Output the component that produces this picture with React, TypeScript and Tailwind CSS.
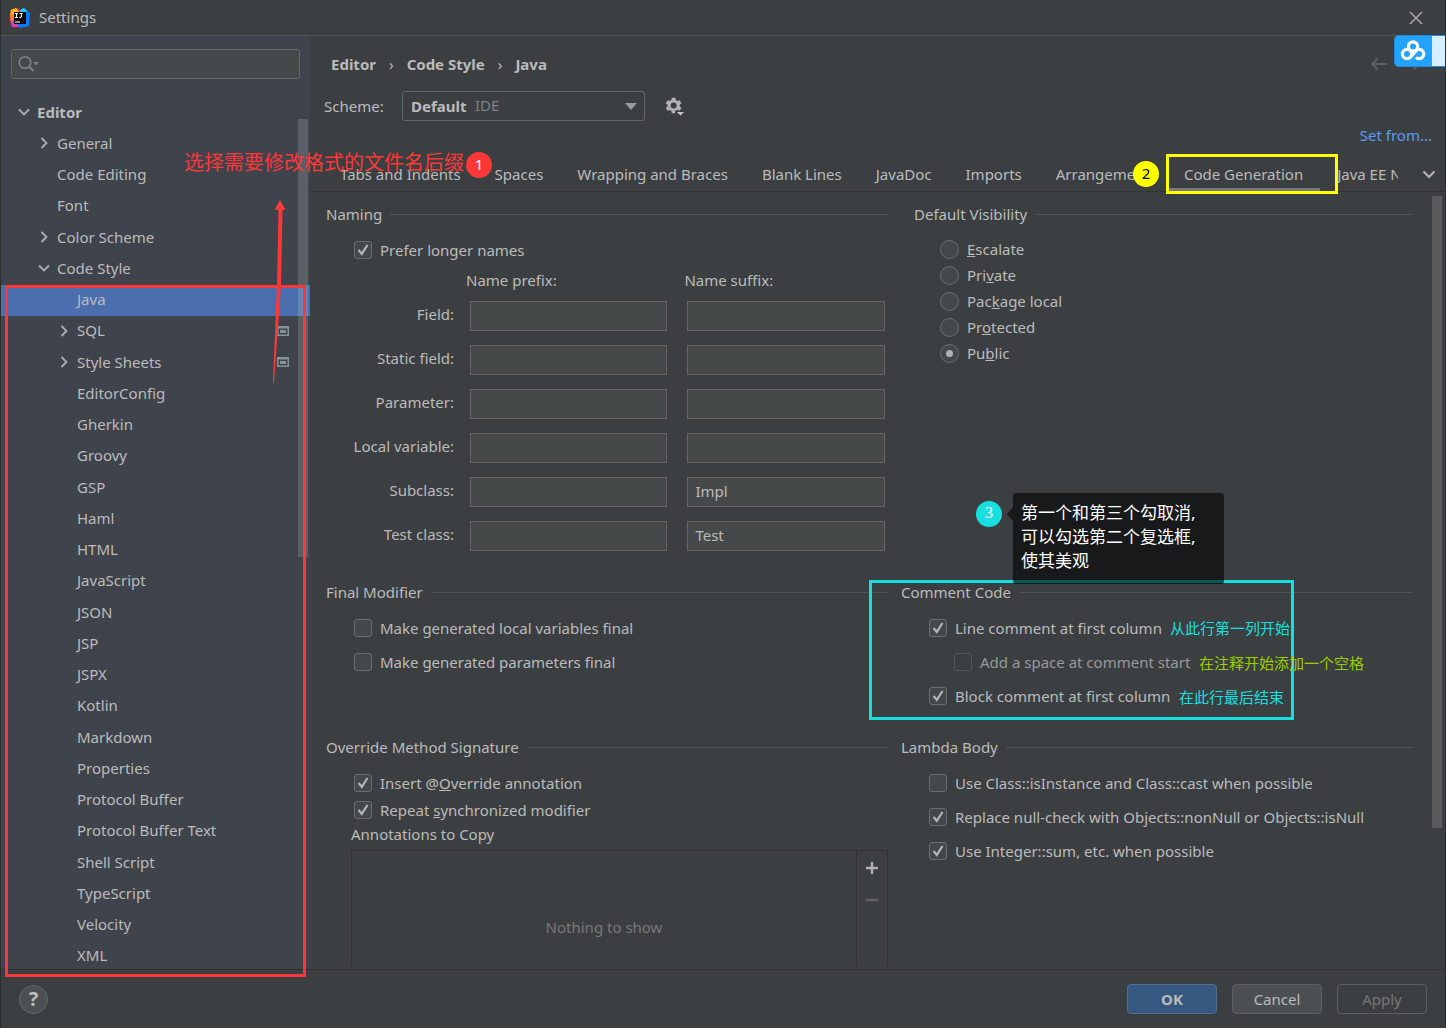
import { useState } from "react";
import type { ReactNode } from "react";

type TreeItem = {
  label: string;
  depth: number;
  arrow?: "open" | "closed";
  project?: boolean;
};

const tree: TreeItem[] = [
  { label: "Editor", depth: 0, arrow: "open" },
  { label: "General", depth: 1, arrow: "closed" },
  { label: "Code Editing", depth: 1 },
  { label: "Font", depth: 1 },
  { label: "Color Scheme", depth: 1, arrow: "closed" },
  { label: "Code Style", depth: 1, arrow: "open" },
  { label: "Java", depth: 2 },
  { label: "SQL", depth: 2, arrow: "closed", project: true },
  { label: "Style Sheets", depth: 2, arrow: "closed", project: true },
  { label: "EditorConfig", depth: 2 },
  { label: "Gherkin", depth: 2 },
  { label: "Groovy", depth: 2 },
  { label: "GSP", depth: 2 },
  { label: "Haml", depth: 2 },
  { label: "HTML", depth: 2 },
  { label: "JavaScript", depth: 2 },
  { label: "JSON", depth: 2 },
  { label: "JSP", depth: 2 },
  { label: "JSPX", depth: 2 },
  { label: "Kotlin", depth: 2 },
  { label: "Markdown", depth: 2 },
  { label: "Properties", depth: 2 },
  { label: "Protocol Buffer", depth: 2 },
  { label: "Protocol Buffer Text", depth: 2 },
  { label: "Shell Script", depth: 2 },
  { label: "TypeScript", depth: 2 },
  { label: "Velocity", depth: 2 },
  { label: "XML", depth: 2 },
];

const indents = ["pl-4", "pl-9", "pl-14"];

const tabs = [
  "Tabs and Indents",
  "Spaces",
  "Wrapping and Braces",
  "Blank Lines",
  "JavaDoc",
  "Imports",
  "Arrangement",
  "Code Generation",
  "Java EE Names",
];

const nameRows = [
  { label: "Field:", suffix: "" },
  { label: "Static field:", suffix: "" },
  { label: "Parameter:", suffix: "" },
  { label: "Local variable:", suffix: "" },
  { label: "Subclass:", suffix: "Impl" },
  { label: "Test class:", suffix: "Test" },
];

function Chevron({ open }: { open: boolean }) {
  return (
    <svg width="14" height="14" viewBox="0 0 14 14" fill="none" stroke="#adb0b2" strokeWidth="1.8">
      <path d={open ? "M2 4.5 7 9.5 12 4.5" : "M4.5 2 9.5 7 4.5 12"} />
    </svg>
  );
}

function AppLogo() {
  return (
    <svg width="20" height="20" viewBox="0 0 20 20">
      <path d="M1 1.5 7 0 11 3 9 18 2 19 0 12Z" fill="#f6416c" />
      <path d="M1 2 6 0 9 4 5 8 0 7Z" fill="#fdb60d" />
      <path d="M0 7 5 6 4 12 1 13Z" fill="#ff7a2f" />
      <path d="M10 2 14 0 20 5 19 18 11 20 5 18 12 10Z" fill="#087cfa" />
      <path d="M10 2 14 0 17 3 12 6Z" fill="#21d0e8" />
      <path d="M2 13 8 17 9 19 2 19Z" fill="#e23bb5" />
      <rect x="4" y="4" width="12" height="12" fill="#120808" />
      <path d="M5 5.5h3M6.5 5.5v4M5 9.5h3M9.5 5.5h3M11.5 5v3.2q0 1.3-2.2 1.2" stroke="#fff" strokeWidth="1.1" fill="none" />
      <path d="M5 14h5" stroke="#fff" strokeWidth="1.1" />
    </svg>
  );
}

function SectionTitle({ children }: { children: ReactNode }) {
  return (
    <h2 className="flex h-6 items-center gap-2 whitespace-nowrap">
      {children}
      <span className="h-px flex-1 bg-[#515355]" />
    </h2>
  );
}

function Check({
  children,
  checked = false,
  disabled = false,
}: {
  children: ReactNode;
  checked?: boolean;
  disabled?: boolean;
}) {
  return (
    <label className={disabled ? "flex h-6 items-center gap-2 text-[#999a9a]" : "flex h-6 items-center gap-2"}>
      <span className="relative h-[18px] w-[18px] shrink-0">
        <input
          type="checkbox"
          defaultChecked={checked}
          disabled={disabled}
          className="peer block h-[18px] w-[18px] appearance-none rounded-[3px] border border-[#6b6e6f] bg-[#43494a] disabled:border-[#545657] disabled:bg-[#3c3f41]"
        />
        <svg
          viewBox="0 0 18 18"
          className="pointer-events-none absolute inset-0 hidden peer-checked:block"
          fill="none"
          stroke="#b4b6b6"
          strokeWidth="2.2"
        >
          <path d="M4.5 9 7.8 12.8 13.5 4" />
        </svg>
      </span>
      <span className="whitespace-nowrap">{children}</span>
    </label>
  );
}

function Radio({ children, checked = false }: { children: ReactNode; checked?: boolean }) {
  return (
    <label className="flex h-6 items-center gap-2">
      <span className="relative h-[19px] w-[19px] shrink-0">
        <input
          type="radio"
          name="visibility"
          defaultChecked={checked}
          className="peer block h-[19px] w-[19px] appearance-none rounded-full border border-[#6b6e6f] bg-[#43494a]"
        />
        <span className="pointer-events-none absolute inset-[6px] hidden rounded-full bg-[#b0b2b2] peer-checked:block" />
      </span>
      <span className="whitespace-nowrap">{children}</span>
    </label>
  );
}

function Sidebar() {
  const [selected, setSelected] = useState("Java");

  return (
    <aside className="relative flex w-[309px] shrink-0 flex-col overflow-hidden bg-[#3f434c]">
      <div className="relative mx-[10px] mt-[13px]">
        <input
          type="search"
          aria-label="Search settings"
          className="block h-[30px] w-full rounded-[3px] border border-[#646668] bg-[#45494a] pr-2 pl-9 outline-none"
        />
        <svg
          className="pointer-events-none absolute top-[6px] left-[7px]"
          width="22"
          height="18"
          viewBox="0 0 22 18"
          fill="none"
          stroke="#7c8287"
          strokeWidth="1.6"
        >
          <circle cx="7" cy="7.5" r="5.8" />
          <path d="M11 11.5 15.5 16" strokeWidth="2" />
          <path d="M15 7h6l-3 3.5Z" fill="#7c8287" stroke="none" />
        </svg>
      </div>

      <ul className="mt-[19px] [&>li:nth-child(4n)]:h-8">
        {tree.map((item) => (
          <li key={item.label} className="h-[31px]">
            <button
              type="button"
              onClick={() => setSelected(item.label)}
              className={`flex h-full w-full items-center gap-[6px] pr-[21px] pb-[3px] text-left ${indents[item.depth]} ${
                item.label === selected ? "bg-[#4b6eaf]" : ""
              }`}
            >
              <span className="w-[14px] shrink-0">
                {item.arrow && <Chevron open={item.arrow === "open"} />}
              </span>
              <span className={item.depth === 0 ? "flex-1 font-bold" : "flex-1"}>{item.label}</span>
              {item.project && (
                <svg width="12" height="10" viewBox="0 0 12 10">
                  <path d="M0 0h12v10H0ZM1.500 2.500v6h9v-6Z" fill="#87939a" fillRule="evenodd" />
                  <rect x="3" y="4" width="6" height="3" fill="#87939a" />
                </svg>
              )}
            </button>
          </li>
        ))}
      </ul>
      <div className="absolute top-[83px] right-[2px] h-[438px] w-[10px] bg-white/15" />
    </aside>
  );
}

function Toolbar() {
  return (
    <div className="relative pt-4">
      <nav className="flex h-6 items-center gap-[13px] pl-[21px] font-bold">
        <a href="#editor">Editor</a>
        <span className="font-normal">›</span>
        <a href="#code-style">Code Style</a>
        <span className="font-normal">›</span>
        <a href="#java">Java</a>
      </nav>

      <button type="button" aria-label="Back" className="absolute top-[19px] right-[57px]">
        <svg width="18" height="18" viewBox="0 0 18 18" fill="none" stroke="#5c5f61" strokeWidth="2">
          <path d="M17 9H2M7.500 3.500 2 9l5.500 5.500" />
        </svg>
      </button>
      <button type="button" aria-label="Forward" className="absolute top-[19px] right-[24px]">
        <svg width="18" height="18" viewBox="0 0 18 18" fill="none" stroke="#5c5f61" strokeWidth="2">
          <path d="M1 9h15M10.500 3.500 16 9l-5.500 5.500" />
        </svg>
      </button>

      <div className="mt-[15px] flex h-[30px] items-center pl-[14px]">
        <label htmlFor="scheme" className="w-[78px]">
          Scheme:
        </label>
        <div className="relative">
          <select
            id="scheme"
            className="h-[30px] w-[243px] appearance-none rounded-[3px] border border-[#646668] bg-[#3c3f41] pl-2 font-bold outline-none"
          >
            <option>Default</option>
          </select>
          <span className="pointer-events-none absolute top-[3px] left-[73px] text-[#7f8182]">IDE</span>
          <svg className="pointer-events-none absolute top-[12px] right-2" width="12" height="7" viewBox="0 0 12 7">
            <path d="M0 0h12L6 7Z" fill="#9a9da0" />
          </svg>
        </div>
        <button type="button" aria-label="Scheme actions" className="ml-5">
          <svg width="20" height="20" viewBox="0 0 22 22" fill="#afb1b3">
            <path
              fillRule="evenodd"
              d="M7.500 2h4l.5 2.500 1.700 1 2.400-.9 2 3.400-1.900 1.700v1.600l1.900 1.700-2 3.400-2.400-.9-1.700 1-.5 2.500h-4L7 16.500l-1.700-1-2.400.9-2-3.400 1.900-1.700V9.700L.9 8l2-3.400 2.400.9 1.700-1ZM9.500 7.200a3.300 3.300 0 1 0 0 6.600 3.300 3.300 0 0 0 0-6.600Z"
            />
            <path d="M11 16h9.500v5H11Z" fill="#3c3f41" />
            <path d="M13 17.500h8l-4 4Z" fill="#c6c8c9" />
          </svg>
        </button>
      </div>

      <div className="mt-[2px] flex h-6 items-center justify-end pr-[13px]">
        <a href="#set-from" className="text-[#589df6]">
          Set from...
        </a>
      </div>

      <div className="mt-[10px] flex h-[35px] border-b border-[#323232] pl-[13px]">
        <div role="tablist" className="flex min-w-0 flex-1 overflow-hidden">
          {tabs.map((tab) => (
            <button
              key={tab}
              type="button"
              role="tab"
              aria-selected={tab === "Code Generation"}
              className="shrink-0 border-b-3 border-transparent px-[17px] pt-[3px] whitespace-nowrap aria-selected:border-[#747a80]"
            >
              {tab}
            </button>
          ))}
        </div>
        <button type="button" aria-label="More tabs" className="w-[47px] shrink-0 pl-6">
          <svg width="14" height="14" viewBox="0 0 14 14" fill="none" stroke="#afb1b3" strokeWidth="2.200">
            <path d="M1.500 4.500 7 10l5.500-5.500" />
          </svg>
        </button>
      </div>
    </div>
  );
}

function CodeGeneration() {
  return (
    <div className="relative mb-[3px] min-h-0 flex-1 overflow-hidden">
      <div className="grid grid-cols-[562fr_512fr] gap-x-[13px] gap-y-6 pt-[10px] pr-8 pl-4">
        <section>
          <SectionTitle>Naming</SectionTitle>
          <div className="mt-3 pl-7">
            <Check checked>Prefer longer names</Check>
          </div>
          <table className="mt-[6px] w-full border-collapse">
            <thead>
              <tr className="h-6 text-left">
                <td className="w-[140px]" />
                <th className="font-normal">Name prefix:</th>
                <th className="pl-3 font-normal">Name suffix:</th>
              </tr>
            </thead>
            <tbody>
              {nameRows.map((row) => (
                <tr key={row.label}>
                  <th className="pt-[7px] pr-3 pb-[7px] text-right font-normal whitespace-nowrap">{row.label}</th>
                  <td className="pt-[9px] pr-[5px] pb-[5px] pl-1">
                    <input
                      aria-label={`${row.label} name prefix`}
                      className="block h-[30px] w-full border border-[#646464] bg-[#45494a] px-[7px] outline-none"
                    />
                  </td>
                  <td className="pt-[9px] pr-[3px] pb-[5px] pl-[15px]">
                    <input
                      aria-label={`${row.label} name suffix`}
                      defaultValue={row.suffix}
                      className="block h-[30px] w-full border border-[#646464] bg-[#45494a] px-[7px] pb-[3px] outline-none"
                    />
                  </td>
                </tr>
              ))}
            </tbody>
          </table>
        </section>

        <section className="pl-[13px]">
          <SectionTitle>Default Visibility</SectionTitle>
          <div className="mt-[11px] flex flex-col gap-[2px] pl-[26px]">
            <Radio>
              <u>E</u>scalate
            </Radio>
            <Radio>
              Pri<u>v</u>ate
            </Radio>
            <Radio>
              Pac<u>k</u>age local
            </Radio>
            <Radio>
              Pr<u>o</u>tected
            </Radio>
            <Radio checked>
              Pu<u>b</u>lic
            </Radio>
          </div>
        </section>

        <section>
          <SectionTitle>Final Modifier</SectionTitle>
          <div className="mt-3 flex flex-col gap-[10px] pl-7">
            <Check>Make generated local variables final</Check>
            <Check>Make generated parameters final</Check>
          </div>
        </section>

        <section className="pb-[3px]">
          <SectionTitle>Comment Code</SectionTitle>
          <div className="mt-3 flex flex-col gap-[10px] pl-7">
            <Check checked>Line comment at first column</Check>
            <div className="pl-[25px]">
              <Check disabled>Add a space at comment start</Check>
            </div>
            <Check checked>Block comment at first column</Check>
          </div>
        </section>

        <section>
          <SectionTitle>Override Method Signature</SectionTitle>
          <div className="mt-3 flex flex-col gap-[3px] pl-7">
            <Check checked>
              Insert @<u>O</u>verride annotation
            </Check>
            <Check checked>
              Repeat <u>s</u>ynchronized modifier
            </Check>
          </div>
          <div className="pl-[25px]">
            <h3 className="h-6 leading-6">Annotations to Copy</h3>
            <div className="mt-1 flex h-[154px] border border-[#323232]">
              <p className="flex flex-1 items-center justify-center text-[#77797a]">Nothing to show</p>
              <div className="flex w-[31px] flex-col items-center gap-[18px] border-l border-[#323232] pt-[10px]">
                <button type="button" aria-label="Add">
                  <svg className="block" width="14" height="14" viewBox="0 0 14 14" stroke="#afb1b3" strokeWidth="2.400">
                    <path d="M7 1v12M1 7h12" />
                  </svg>
                </button>
                <button type="button" aria-label="Remove" disabled>
                  <svg className="block" width="14" height="14" viewBox="0 0 14 14" stroke="#5f6162" strokeWidth="2.400">
                    <path d="M1 7h12" />
                  </svg>
                </button>
              </div>
            </div>
          </div>
        </section>

        <section>
          <SectionTitle>Lambda Body</SectionTitle>
          <div className="mt-3 flex flex-col gap-[10px] pl-7">
            <Check>Use Class::isInstance and Class::cast when possible</Check>
            <Check checked>Replace null-check with Objects::nonNull or Objects::isNull</Check>
            <Check checked>Use Integer::sum, etc. when possible</Check>
          </div>
        </section>
      </div>
      <div className="absolute top-1 right-[3px] h-[632px] w-[10px] bg-[#595b5d]" />
    </div>
  );
}

// Notes and marks drawn over the dialog
function Annotations() {
  return (
    <div className="pointer-events-none absolute -inset-x-px inset-y-0 leading-6">
      <div className="absolute top-[285px] left-[5px] h-[692px] w-[301px] border-3 border-[#fc3737]" />
      <svg className="absolute top-[200px] left-[270px]" width="20" height="184" viewBox="0 0 20 184" fill="#fc3737">
        <path d="M10 0 15.500 10H12.500L11 85 4 183H3L7 85 8.500 10H4.500Z" />
      </svg>
      <p className="absolute top-[151px] left-[184px] text-[20px] whitespace-nowrap text-[#fc3737]">
        选择需要修改格式的文件名后缀
      </p>
      <span className="absolute top-[152px] left-[466px] h-[26px] w-[26px] rounded-full bg-[#fc3737] text-center text-white">
        1
      </span>

      <div className="absolute top-[154px] left-[1166px] h-[40px] w-[172px] border-3 border-[#ffff00]" />
      <span className="absolute top-[161px] left-[1133px] h-[26px] w-[26px] rounded-full bg-[#ffff00] text-center text-black">
        2
      </span>

      <div className="absolute top-[580px] left-[869px] h-[140px] w-[425px] border-3 border-[#17dfdf]" />
      <span className="absolute top-[501px] left-[976px] h-[26px] w-[26px] rounded-full bg-[#17dfdf] text-center font-['Liberation_Serif',serif] text-base leading-6 text-white">
        3
      </span>
      <div className="absolute top-[493px] left-[1013px] h-[91px] w-[211px] rounded-[3px] bg-black/60 px-2 py-2 text-[17px] whitespace-nowrap text-white">
        <svg className="absolute top-[14px] left-[-6px]" width="6" height="14" viewBox="0 0 6 14">
          <path d="M6 0v14L0 7Z" fill="#000" fillOpacity="0.600" />
        </svg>
        第一个和第三个勾取消,
        <br />
        可以勾选第二个复选框,
        <br />
        使其美观
      </div>
      <p className="absolute top-[616px] left-[1170px] whitespace-nowrap text-[#17dfdf]">从此行第一列开始</p>
      <p className="absolute top-[651px] left-[1199px] whitespace-nowrap text-[#9acd00]">在注释开始添加一个空格</p>
      <p className="absolute top-[685px] left-[1179px] whitespace-nowrap text-[#17dfdf]">在此行最后结束</p>

      {/* Cloud drive floating widget */}
      <div className="absolute top-[35px] right-0 flex h-8 w-[52px] overflow-hidden rounded-l-[5px] border border-r-0 border-[#2388dd] bg-[#21a3ff]">
        <svg className="mt-1 ml-[5px]" width="26" height="22" viewBox="0 0 26 22" fill="none" stroke="#fff" strokeWidth="3.200">
          <circle cx="13" cy="6.500" r="4.600" />
          <circle cx="7" cy="14" r="4.600" />
          <path d="M10.500 17.200 15.800 10.900a4.600 4.600 0 1 1 .2 6.400" />
        </svg>
        <span className="ml-auto w-[14px] bg-[#d6efff]" />
      </div>
    </div>
  );
}

export default function App() {
  return (
    <div className="relative flex h-screen flex-col overflow-hidden border-x border-[#2b2d2e] bg-[#3c3f41] font-['Noto_Sans','Noto_Sans_CJK_SC',sans-serif] text-[15px] text-[#bbbbbb]">
      <header className="flex h-9 shrink-0 items-center gap-[9px] border-b border-[#515355] pr-[22px] pl-[9px]">
        <AppLogo />
        <h1 className="flex-1">Settings</h1>
        <button type="button" aria-label="Close">
          <svg width="14" height="14" viewBox="0 0 14 14" stroke="#b5b7b8" strokeWidth="1.200">
            <path d="M1 1 13 13M13 1 1 13" />
          </svg>
        </button>
      </header>

      <div className="flex min-h-0 flex-1">
        <Sidebar />
        <main className="flex min-w-0 flex-1 flex-col">
          <Toolbar />
          <CodeGeneration />
        </main>
      </div>

      <footer className="flex h-[59px] shrink-0 items-center gap-[15px] border-t border-[#323232] pr-[18px] pl-[18px]">
        <button
          type="button"
          aria-label="Help"
          className="mr-auto h-[29px] w-[29px] rounded-full border border-[#646668] bg-[#4c5052] text-[20px] leading-6 font-bold"
        >
          ?
        </button>
        <button type="button" className="h-[30px] w-[90px] rounded-[4px] border border-[#4c708c] bg-[#365880] font-bold">
          OK
        </button>
        <button type="button" className="h-[30px] w-[90px] rounded-[4px] border border-[#5e6060] bg-[#4c5052]">
          Cancel
        </button>
        <button type="button" disabled className="h-[30px] w-[90px] rounded-[4px] border border-[#5e6060] text-[#777777]">
          Apply
        </button>
      </footer>

      <Annotations />
    </div>
  );
}
